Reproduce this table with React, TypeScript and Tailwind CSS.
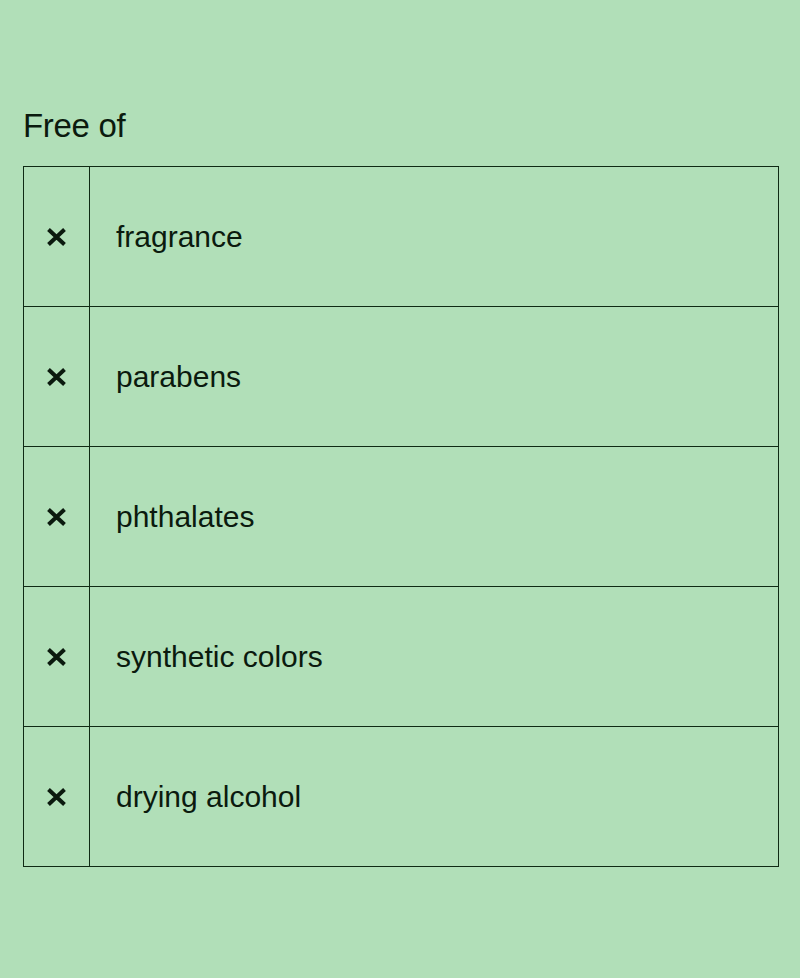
import React from 'react';

const items = ['fragrance', 'parabens', 'phthalates', 'synthetic colors', 'drying alcohol'];

const Cross = () => (
  <svg width="21" height="20" viewBox="0 0 21 20" className="block">
    <path d="M2.5 2.5 L18.5 17.5 M18.5 2.5 L2.5 17.5" stroke="#0b1a0e" strokeWidth="4" strokeLinecap="butt" />
  </svg>
);

const App = () => {
  return (
    <div className="min-h-[978px] w-full bg-[#b1dfb8] px-[23px] pt-[106px] text-[#0b1a0e] font-['Liberation_Sans',Arial,sans-serif]">
      <h2 className="text-[33px] leading-[40px] tracking-[-0.3px] mb-[20px]">Free of</h2>
      <div className="w-[756px] border-t border-x border-[#0f2a14]">
        {items.map((item) => (
          <div key={item} className="flex h-[140px] border-b border-[#0f2a14]">
            <div className="w-[66px] flex items-center justify-center border-r border-[#0f2a14]">
              <Cross />
            </div>
            <div className="flex items-center pl-[26px] pt-[1px] text-[30px] leading-none">{item}</div>
          </div>
        ))}
      </div>
    </div>
  );
};

export default App;
